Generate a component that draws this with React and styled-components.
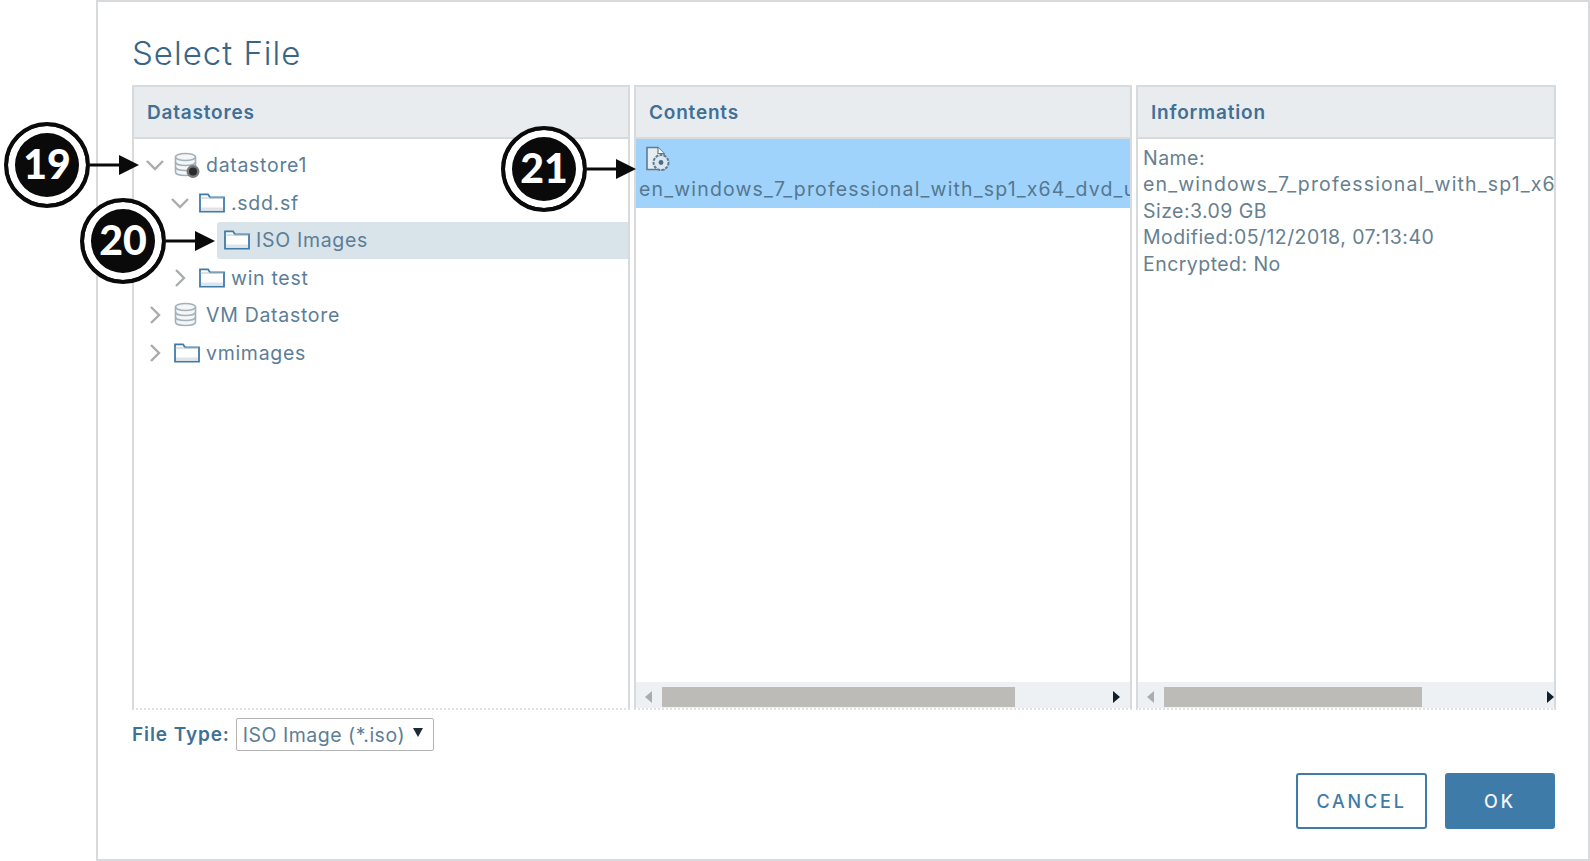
import styled, { createGlobalStyle } from "styled-components";

const GlobalStyle = createGlobalStyle`
  html, body { margin: 0; padding: 0; background: #fff; }
  body { font-family: Inter, "Liberation Sans", sans-serif; }
`;

const Page = styled.div`
  position: relative;
  width: 1590px;
  height: 861px;
  overflow: hidden;
  background: #fff;
`;

const Modal = styled.div`
  box-sizing: border-box;
  margin-left: 96px;
  width: 1494px;
  height: 861px;
  padding: 31px 33px 0 34px;
  border: 2px solid #d8dbde;
`;

const Title = styled.h1`
  margin: 0;
  height: 52px;
  font-size: 33px;
  line-height: 40px;
  font-weight: 300;
  letter-spacing: 1px;
  color: #3b6585;
`;

const Panels = styled.div`
  display: grid;
  grid-template-columns: 498px 498px 420px;
  gap: 4px;
  height: 625px;
`;

const Panel = styled.section`
  display: flex;
  flex-direction: column;
  min-width: 0;
  overflow: hidden;
  border-left: 2px solid #d8dbde;
  border-right: 2px solid #d8dbde;
  border-bottom: 2px dotted #dfe3e6;
`;

const PanelHead = styled.header`
  box-sizing: border-box;
  height: 54px;
  flex: none;
  padding: 0 13px;
  display: flex;
  align-items: center;
  background: #e9ecef;
  border-top: 2px solid #d8dbde;
  border-bottom: 2px solid #d8dbde;
  color: #3f7097;
  font-size: 19px;
  font-weight: 600;
  letter-spacing: 0.8px;
`;

const PanelBody = styled.div`
  flex: 1;
  min-height: 0;
  overflow: hidden;
`;

const Tree = styled.div`
  padding-top: 7.5px;
`;

const Row = styled.div`
  display: flex;
  align-items: stretch;
  height: 37.5px;
  padding-left: ${(p) => 12 + p.$level * 25}px;
`;

const Toggle = styled.span`
  flex: none;
  width: 21px;
  display: flex;
  align-items: center;
`;

const RowContent = styled.div`
  flex: 1;
  display: flex;
  align-items: center;
  gap: 6px;
  padding-left: 7px;
  font-size: 19.5px;
  letter-spacing: 0.7px;
  color: #5b7e98;
  background: ${(p) => (p.$selected ? "#d9e4ea" : "transparent")};
  border-radius: 3px 0 0 3px;
`;

const FileRow = styled.div`
  height: 69px;
  background: #9fd3fb;
  padding: 7px 0 0 3px;
  box-sizing: border-box;
  color: #56778f;
  font-size: 19.5px;
  white-space: nowrap;
`;

const FileIcon = styled.div`
  height: 31px;
  padding-left: 6px;
`;

const FileName = styled.div`
  overflow: hidden;
  letter-spacing: 1.15px;
`;

const InfoList = styled.div`
  padding: 6px 0 0 5px;
  font-size: 19.5px;
  line-height: 26.4px;
  letter-spacing: 0.45px;
  color: #66808f;
  white-space: nowrap;
`;

const Scrollbar = styled.div`
  box-sizing: border-box;
  flex: none;
  height: 26px;
  padding-top: 4px;
  display: flex;
  align-items: center;
  background: #eef1f3;
`;

const ArrowSlot = styled.span`
  flex: none;
  width: ${(p) => p.$width}px;
  display: flex;
  justify-content: center;
`;

const Track = styled.div`
  flex: 1;
  height: 20px;
`;

const Thumb = styled.div`
  width: ${(p) => p.$width}px;
  height: 100%;
  background: #bdbbb8;
`;

const FilterRow = styled.div`
  display: flex;
  align-items: center;
  gap: 6px;
  margin-top: 8px;
  height: 33px;
`;

const FilterLabel = styled.label`
  font-size: 19px;
  font-weight: 600;
  letter-spacing: 0.9px;
  color: #3f7097;
`;

const Select = styled.div`
  box-sizing: border-box;
  width: 198px;
  height: 33px;
  padding: 0 10px 4px 6px;
  display: flex;
  align-items: center;
  justify-content: space-between;
  border: 1.5px solid #b4b4b4;
  border-radius: 2px;
  font-size: 19.5px;
  letter-spacing: 0.5px;
  color: #5b7e98;
`;

const SelectLabel = styled.span`
  position: relative;
  top: 2px;
`;

const Footer = styled.div`
  display: flex;
  justify-content: flex-end;
  gap: 18px;
  margin-top: 22px;
`;

const Button = styled.button`
  box-sizing: border-box;
  width: ${(p) => p.$width}px;
  height: 56px;
  border-radius: 3px;
  border: 2px solid #3f7ba8;
  background: ${(p) => (p.$primary ? "#3f7ba8" : "#fff")};
  color: ${(p) => (p.$primary ? "#f2f6f9" : "#3f7ba8")};
  font-family: inherit;
  font-size: 18px;
  font-weight: 500;
  letter-spacing: 2.8px;
`;

const Callout = styled.div`
  position: absolute;
  left: ${(p) => p.$left}px;
  top: ${(p) => p.$top}px;
  display: flex;
  align-items: center;
`;

const Badge = styled.div`
  box-sizing: border-box;
  width: 86px;
  height: 86px;
  padding-bottom: 3px;
  border-radius: 50%;
  background: #0a0a0a;
  border: 4px solid #0a0a0a;
  box-shadow: inset 0 0 0 7px #fff;
  display: flex;
  align-items: center;
  justify-content: center;
  color: #fff;
  font-family: Lato, sans-serif;
  font-size: 41px;
  font-weight: 900;
`;

const Chevron = ({ open }) => (
  <svg width="18" height="18" viewBox="0 0 18 18" fill="none" stroke="#a9acae" strokeWidth="2.4">
    {open ? <path d="M1 5l8 8 8-8" /> : <path d="M5 1l8 8-8 8" />}
  </svg>
);

const Folder = () => (
  <svg width="26" height="20" viewBox="0 0 26 20" fill="none" style={{ flex: "none" }}>
    <path d="M1 18.7V1.3h8l2 3h14v14.4z" fill="#fff" stroke="#3f7ba8" strokeWidth="1.8" />
    <path d="M1.5 5h23" stroke="#b9c3ca" strokeWidth="1" />
    <path d="M2 14.5h22v3.2H2z" fill="#dfe4e8" />
  </svg>
);

const Database = ({ badge }) => (
  <svg width="26" height="26" viewBox="0 0 26 26" fill="none" style={{ flex: "none" }}>
    <g stroke="#a3b1bb" strokeWidth="1.6" fill="#f4f6f7">
      <path d="M1.5 5v15c0 2 4 3.5 10 3.5s10-1.5 10-3.5V5" />
      <ellipse cx="11.5" cy="5" rx="10" ry="3.5" />
      <path d="M1.5 10c0 2 4 3.5 10 3.5s10-1.5 10-3.5M1.5 15c0 2 4 3.5 10 3.5s10-1.5 10-3.5" fill="none" />
    </g>
    {badge && (
      <>
        <circle cx="19" cy="19.5" r="6.5" fill="#77797c" />
        <circle cx="19" cy="19.5" r="4" fill="#2b2b2b" />
      </>
    )}
  </svg>
);

const DiscFile = () => (
  <svg width="26" height="26" viewBox="0 0 26 26" fill="none">
    <path d="M2 1.5h11l6 6v16H2z" fill="#e6eef3" stroke="#5d7c93" strokeWidth="1.6" />
    <path d="M13 1.5v6h6" stroke="#5d7c93" strokeWidth="1.2" fill="#fff" />
    <circle cx="16" cy="16.5" r="7.5" fill="#dbe7ef" stroke="#5d7c93" strokeWidth="2" strokeDasharray="3 1.2" />
    <circle cx="16" cy="16.5" r="2.4" fill="#4d6c83" />
  </svg>
);

const Triangle = ({ dir, color }) =>
  dir === "down" ? (
    <svg width="10" height="9" viewBox="0 0 10 9">
      <path d="M0 0h10L5 9z" fill={color} />
    </svg>
  ) : (
    <svg width="8" height="12" viewBox="0 0 8 12">
      <path d={dir === "left" ? "M7 0v12L0 6z" : "M1 0v12l7-6z"} fill={color} />
    </svg>
  );

const Pointer = () => (
  <svg width="49" height="22" viewBox="0 0 49 22">
    <path d="M0 9.5h30v3H0z" fill="#0a0a0a" />
    <path d="M29 1l20 10-20 10z" fill="#0a0a0a" />
  </svg>
);

const treeItems = [
  { level: 0, open: true, icon: "db", badge: true, label: "datastore1" },
  { level: 1, open: true, icon: "folder", label: ".sdd.sf" },
  { level: 2, icon: "folder", label: "ISO Images", selected: true, leaf: true },
  { level: 1, icon: "folder", label: "win test" },
  { level: 0, icon: "db", label: "VM Datastore" },
  { level: 0, icon: "folder", label: "vmimages" },
];

const fileName = "en_windows_7_professional_with_sp1_x64_dvd_u677056.iso";

const callouts = [
  { n: 19, left: 4, top: 122 },
  { n: 20, left: 80, top: 198 },
  { n: 21, left: 501, top: 126 },
];

const PanelScroll = ({ thumb, offset, right }) => (
  <Scrollbar>
    <ArrowSlot $width={offset}>
      <Triangle dir="left" color="#a9adb0" />
    </ArrowSlot>
    <Track>
      <Thumb $width={thumb} />
    </Track>
    <ArrowSlot $width={right}>
      <Triangle dir="right" color="#10202c" />
    </ArrowSlot>
  </Scrollbar>
);

export default function App() {
  return (
    <Page>
      <GlobalStyle />
      <Modal>
        <Title>Select File</Title>
        <Panels>
          <Panel>
            <PanelHead>Datastores</PanelHead>
            <PanelBody>
              <Tree>
                {treeItems.map((item) => (
                  <Row key={item.label} $level={item.level}>
                    <Toggle>{!item.leaf && <Chevron open={item.open} />}</Toggle>
                    <RowContent $selected={item.selected}>
                      {item.icon === "db" ? <Database badge={item.badge} /> : <Folder />}
                      {item.label}
                    </RowContent>
                  </Row>
                ))}
              </Tree>
            </PanelBody>
          </Panel>
          <Panel>
            <PanelHead>Contents</PanelHead>
            <PanelBody>
              <FileRow>
                <FileIcon>
                  <DiscFile />
                </FileIcon>
                <FileName>{fileName}</FileName>
              </FileRow>
            </PanelBody>
            <PanelScroll thumb={353} offset={26} right={28} />
          </Panel>
          <Panel>
            <PanelHead>Information</PanelHead>
            <PanelBody>
              <InfoList>
                <div>Name:</div>
                <FileName>{fileName}</FileName>
                <div>Size:3.09 GB</div>
                <div>Modified:05/12/2018, 07:13:40</div>
                <div>Encrypted: No</div>
              </InfoList>
            </PanelBody>
            <PanelScroll thumb={258} offset={26} right={8} />
          </Panel>
        </Panels>
        <FilterRow>
          <FilterLabel>File Type:</FilterLabel>
          <Select>
            <SelectLabel>ISO Image (*.iso)</SelectLabel>
            <Triangle dir="down" color="#1d2b36" />
          </Select>
        </FilterRow>
        <Footer>
          <Button $width={131}>CANCEL</Button>
          <Button $width={110} $primary>
            OK
          </Button>
        </Footer>
      </Modal>
      {callouts.map((c) => (
        <Callout key={c.n} $left={c.left} $top={c.top}>
          <Badge>{c.n}</Badge>
          <Pointer />
        </Callout>
      ))}
    </Page>
  );
}
